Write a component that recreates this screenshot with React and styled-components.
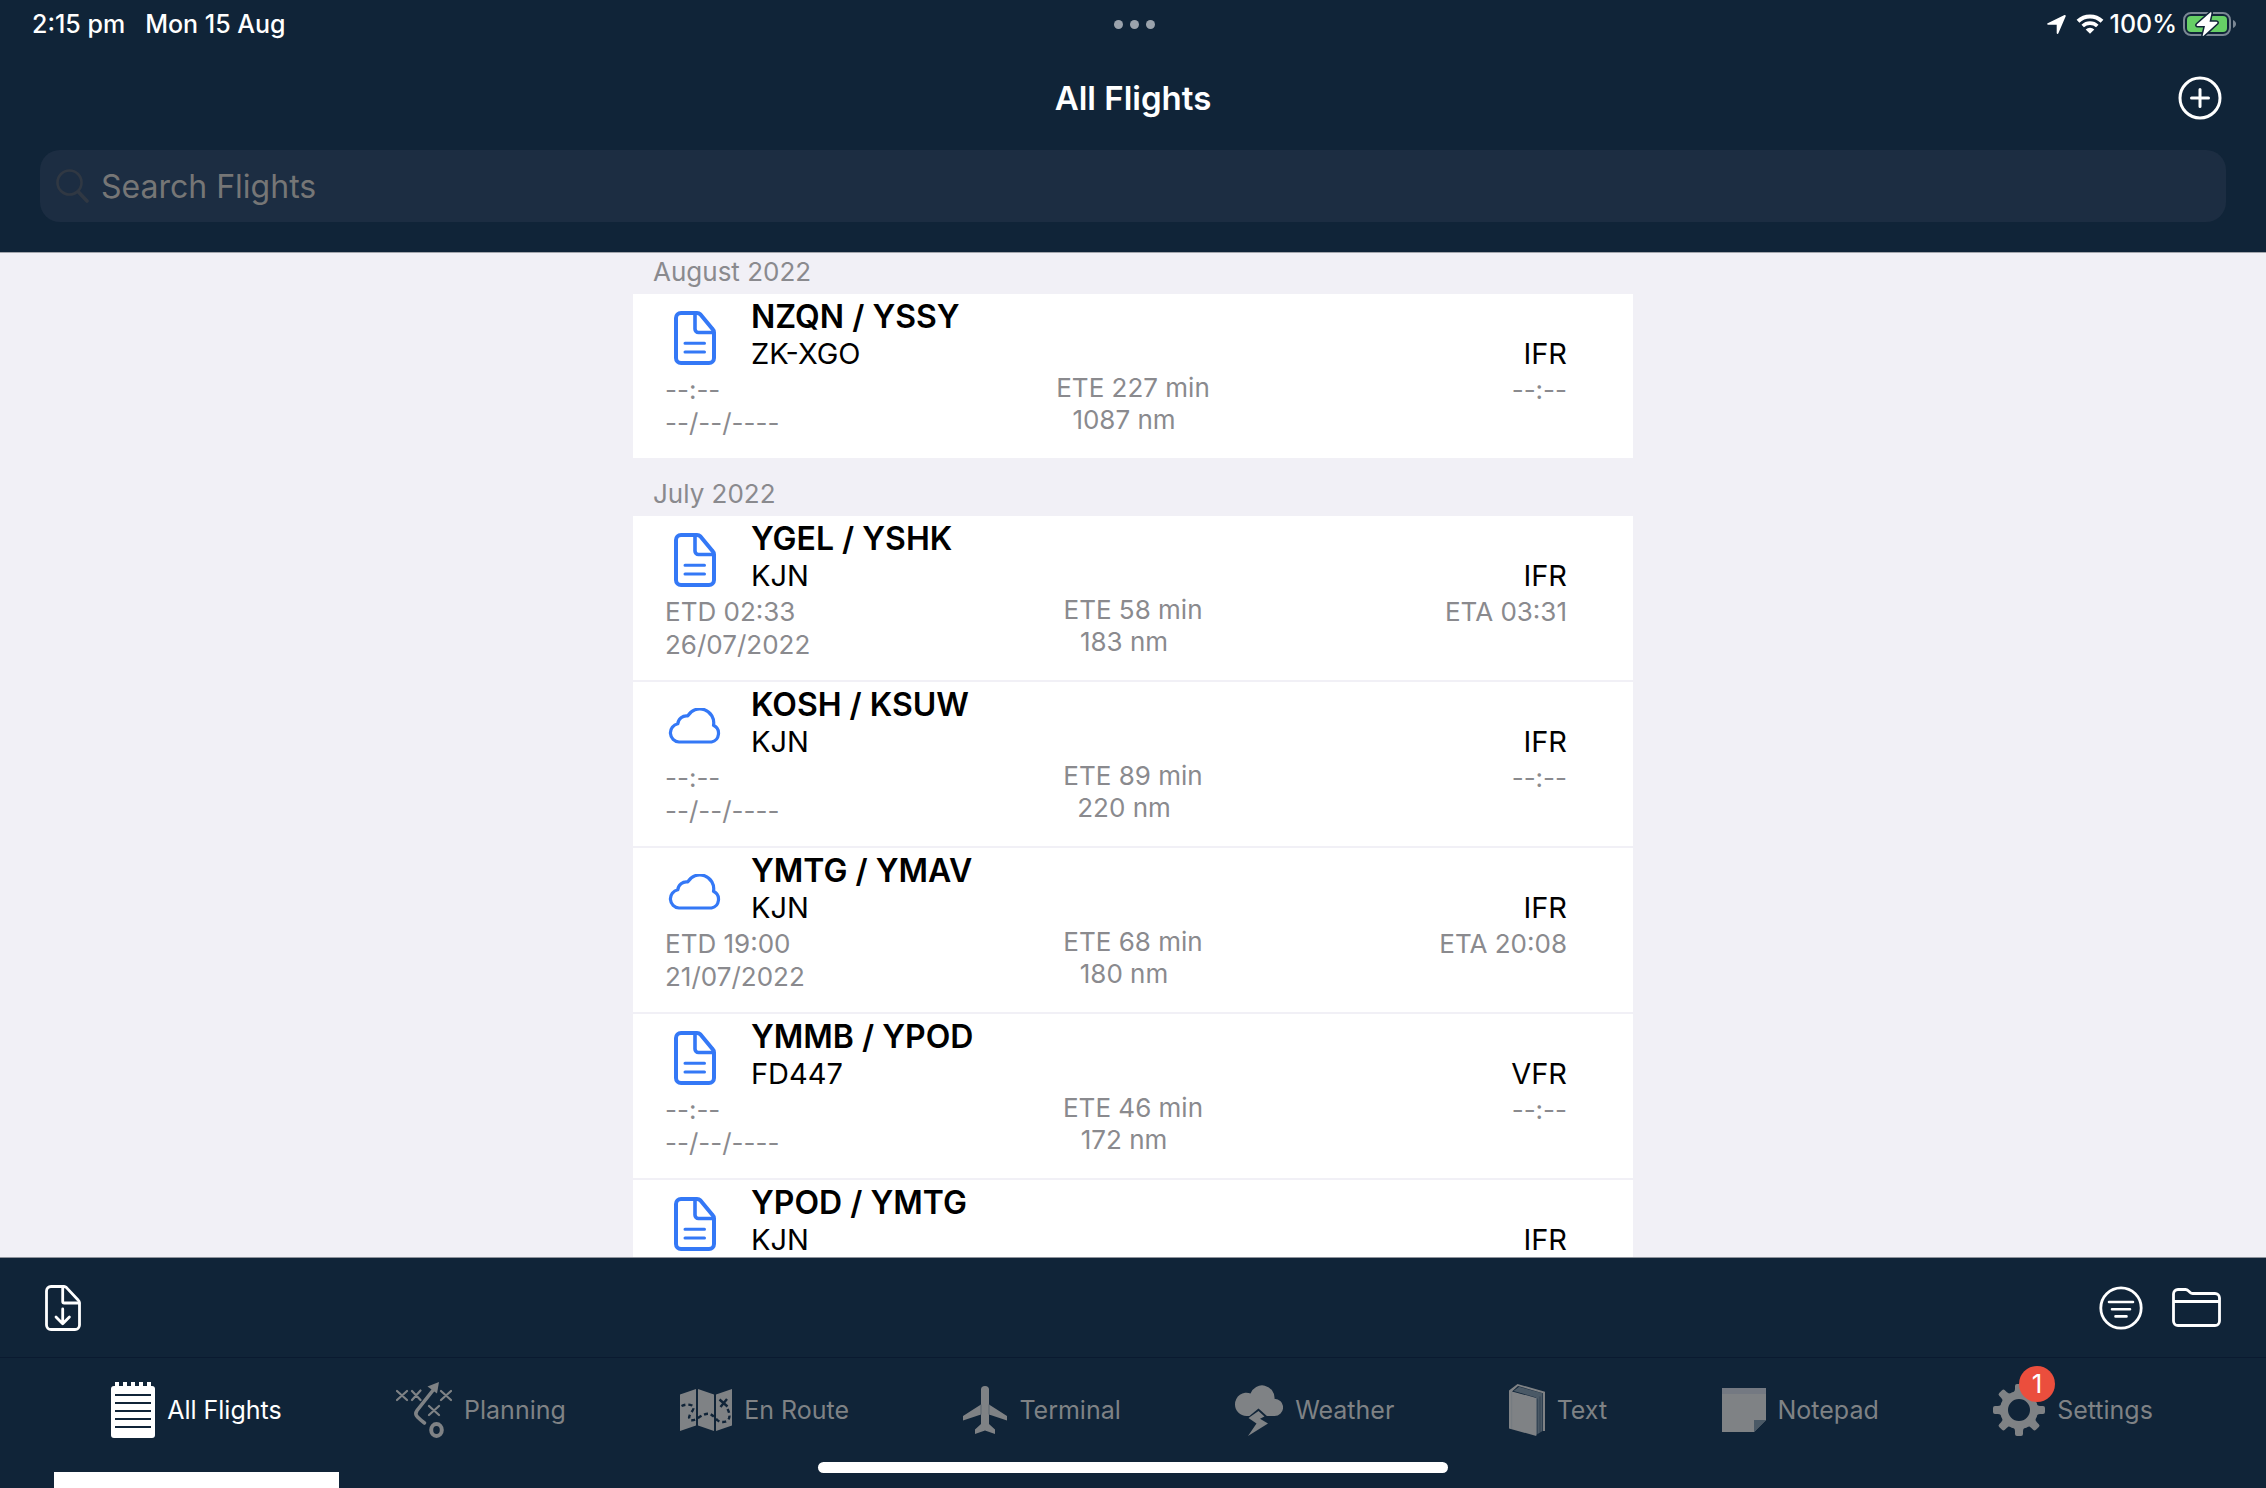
import React from "react";
import styled, { createGlobalStyle } from "styled-components";

const navy = "#102438";
const muted = "#7f8285";
const shade = "#4a5966";

const sections = [
  {
    month: "August 2022",
    flights: [
      {
        route: "NZQN / YSSY",
        craft: "ZK-XGO",
        rules: "IFR",
        icon: "document",
        meta: {
          etd: "--:--",
          date: "--/--/----",
          ete: "ETE 227 min",
          distance: "1087 nm",
          eta: "--:--",
        },
      },
    ],
  },
  {
    month: "July 2022",
    flights: [
      {
        route: "YGEL / YSHK",
        craft: "KJN",
        rules: "IFR",
        icon: "document",
        meta: {
          etd: "ETD 02:33",
          date: "26/07/2022",
          ete: "ETE 58 min",
          distance: "183 nm",
          eta: "ETA 03:31",
        },
      },
      {
        route: "KOSH / KSUW",
        craft: "KJN",
        rules: "IFR",
        icon: "cloud",
        meta: {
          etd: "--:--",
          date: "--/--/----",
          ete: "ETE 89 min",
          distance: "220 nm",
          eta: "--:--",
        },
      },
      {
        route: "YMTG / YMAV",
        craft: "KJN",
        rules: "IFR",
        icon: "cloud",
        meta: {
          etd: "ETD 19:00",
          date: "21/07/2022",
          ete: "ETE 68 min",
          distance: "180 nm",
          eta: "ETA 20:08",
        },
      },
      {
        route: "YMMB / YPOD",
        craft: "FD447",
        rules: "VFR",
        icon: "document",
        meta: {
          etd: "--:--",
          date: "--/--/----",
          ete: "ETE 46 min",
          distance: "172 nm",
          eta: "--:--",
        },
      },
      { route: "YPOD / YMTG", craft: "KJN", rules: "IFR", icon: "document" },
    ],
  },
];

const tabs = [
  { name: "All Flights", Icon: NotesIcon, active: true },
  { name: "Planning", Icon: PlanningIcon },
  { name: "En Route", Icon: MapIcon },
  { name: "Terminal", Icon: PlaneIcon },
  { name: "Weather", Icon: StormIcon },
  { name: "Text", Icon: BookIcon },
  { name: "Notepad", Icon: StickyIcon },
  { name: "Settings", Icon: GearIcon, badge: 1 },
];

export default function App() {
  return (
    <Page>
      <GlobalStyle />
      <Header>
        <StatusBar>
          <StatusGroup $gap={20}>
            <span>2:15 pm</span>
            <span>Mon 15 Aug</span>
          </StatusGroup>
          <Dots>
            <Dot />
            <Dot />
            <Dot />
          </Dots>
          <StatusGroup $gap={6} $end>
            <StatusGroup $gap={10}>
              <LocationIcon />
              <WifiIcon />
            </StatusGroup>
            <span>100%</span>
            <BatteryIcon />
          </StatusGroup>
        </StatusBar>
        <NavBar>
          <Heading>All Flights</Heading>
          <IconButton aria-label="Add flight">
            <AddIcon />
          </IconButton>
        </NavBar>
        <SearchArea>
          <SearchBox>
            <SearchIcon />
            <SearchInput
              type="text"
              aria-label="Search Flights"
              placeholder="Search Flights"
            />
          </SearchBox>
        </SearchArea>
      </Header>

      <Main>
        {sections.map((section) => (
          <Section key={section.month}>
            <SectionTitle>{section.month}</SectionTitle>
            <FlightList>
              {section.flights.map((flight) => (
                <FlightRow key={flight.route} flight={flight} />
              ))}
            </FlightList>
          </Section>
        ))}
      </Main>

      <ToolBar>
        <IconButton aria-label="Import flight">
          <ImportIcon />
        </IconButton>
        <ToolGroup>
          <IconButton aria-label="Filter">
            <FilterIcon />
          </IconButton>
          <IconButton aria-label="Folders">
            <FolderIcon />
          </IconButton>
        </ToolGroup>
      </ToolBar>

      <TabBar>
        {tabs.map(({ name, Icon, active, badge }) => (
          <Tab key={name} $active={active}>
            <TabIcon>
              <Icon />
              {badge && <Badge>{badge}</Badge>}
            </TabIcon>
            {name}
          </Tab>
        ))}
        <HomeIndicator />
      </TabBar>
    </Page>
  );
}

function FlightRow({ flight }) {
  const { route, craft, rules, icon, meta } = flight;
  return (
    <Flight>
      <FlightTop>
        <FlightIcon>
          {icon === "cloud" ? <CloudIcon /> : <DocumentIcon />}
        </FlightIcon>
        <FlightNames>
          <Route>{route}</Route>
          <Craft>{craft}</Craft>
        </FlightNames>
        <Craft>{rules}</Craft>
      </FlightTop>
      {meta && (
        <FlightMeta>
          <Departure>
            <span>{meta.etd}</span>
            <span>{meta.date}</span>
          </Departure>
          <Enroute>
            <span>{meta.ete}</span>
            <Distance>{meta.distance}</Distance>
          </Enroute>
          <Arrival>{meta.eta}</Arrival>
        </FlightMeta>
      )}
    </Flight>
  );
}

function LocationIcon() {
  return (
    <svg width="19" height="19" viewBox="0 0 19 19" fill="#fff">
      <path d="M.7 8.200 17.500.1c.8-.3 1.500.4 1.200 1.200l-7.300 17c-.4.9-1.700.8-1.700-.3V9.700H1.200C0 9.700-.2 8.600.7 8.200z" />
    </svg>
  );
}

function WifiIcon() {
  return (
    <svg width="28" height="20" viewBox="0 0 28 20" fill="none">
      <path d="M2 7.300a17.300 17.300 0 0 1 24 0" stroke="#fff" strokeWidth="4" />
      <path d="M6.700 12a10.600 10.600 0 0 1 14.600 0" stroke="#fff" strokeWidth="3.600" />
      <path d="M9.700 15.400a6.400 6.400 0 0 1 8.600 0L14 19.800z" fill="#fff" />
    </svg>
  );
}

function BatteryIcon() {
  return (
    <svg width="53" height="24" viewBox="0 0 53 24">
      <rect x="1" y="1" width="46" height="22" rx="7" fill="none" stroke="#7b8794" strokeWidth="2" />
      <rect x="4" y="4" width="40" height="16" rx="4" fill="#67cf66" />
      <path d="M50 8c4 1.500 4 6.500 0 8z" fill="#7b8794" />
      <path
        d="M27.300.5 14 12.300c-.8.8-.4 1.700.6 1.700H22l-2.200 9c-.3 1 .4 1.200 1.100.6L34 11.500c.8-.8.4-1.700-.6-1.700H26.500l2-8.700c.2-.9-.6-1.200-1.200-.6z"
        fill="#fff"
        stroke={navy}
        strokeWidth="3"
        paintOrder="stroke"
      />
    </svg>
  );
}

function AddIcon() {
  return (
    <svg width="44" height="44" viewBox="0 0 44 44" fill="none" stroke="#fff" strokeWidth="3" strokeLinecap="round">
      <circle cx="22" cy="22" r="20" />
      <path d="M22 13.500v17M13.500 22h17" />
    </svg>
  );
}

function SearchIcon() {
  return (
    <svg width="33" height="34" viewBox="0 0 33 34" fill="none" stroke="#303843" strokeLinecap="round">
      <circle cx="13.500" cy="13.500" r="12" strokeWidth="2.600" />
      <path d="m22.500 23 8.500 9" strokeWidth="3.600" />
    </svg>
  );
}

function DocumentIcon() {
  return (
    <svg width="42" height="54" viewBox="0 0 42 54" fill="none" stroke="#3478f6" strokeWidth="4" strokeLinecap="round" strokeLinejoin="round">
      <path d="M23 2H7a5 5 0 0 0-5 5v40a5 5 0 0 0 5 5h28a5 5 0 0 0 5-5V21.500a5 5 0 0 0-1.500-3.500L26.500 3.500A5 5 0 0 0 23 2z" />
      <path d="M21 3v15a3.500 3.500 0 0 0 3.500 3.500H39" strokeWidth="3.600" />
      <path d="M11 32.300h19.500M11 41h19.500" strokeWidth="3" />
    </svg>
  );
}

function CloudIcon() {
  return (
    <svg width="54" height="36" viewBox="0 0 54 36" fill="none" stroke="#3478f6" strokeWidth="3.200" strokeLinejoin="round">
      <path d="M11 34A9.200 9.200 0 0 1 9.800 15.800 8.600 8.600 0 0 1 19.700 8 13.900 13.900 0 0 1 45.500 17.300 8.900 8.900 0 0 1 43.500 34z" />
    </svg>
  );
}

function ImportIcon() {
  return (
    <svg width="36" height="46" viewBox="0 0 36 46" fill="none" stroke="#fff" strokeWidth="2.800" strokeLinecap="round" strokeLinejoin="round">
      <path d="M19 1.500H6A4.500 4.500 0 0 0 1.500 6v34A4.500 4.500 0 0 0 6 44.500h24a4.500 4.500 0 0 0 4.500-4.500V18a4 4 0 0 0-1.200-2.800L21.500 2.600A4 4 0 0 0 19 1.500z" />
      <path d="M17.700 2v14.500a1.500 1.500 0 0 0 1.500 1.500H34M17.700 24v14.500M11 32l6.700 6.700 6.700-6.700" />
    </svg>
  );
}

function FilterIcon() {
  return (
    <svg width="44" height="44" viewBox="0 0 44 44" fill="none" stroke="#fff" strokeWidth="2.800" strokeLinecap="round">
      <circle cx="22" cy="22" r="20.200" />
      <path d="M10 16h24M13 23.200h18M16.500 30.400h11" strokeWidth="2.600" />
    </svg>
  );
}

function FolderIcon() {
  return (
    <svg width="49" height="39" viewBox="0 0 49 39" fill="none" stroke="#fff" strokeWidth="2.800" strokeLinejoin="round">
      <path d="M1.500 6A4.500 4.500 0 0 1 6 1.500h7.500c1.200 0 2 .4 2.800 1.200l1.900 1.800c.7.700 1.400 1 2.400 1H43A4.500 4.500 0 0 1 47.500 10v23a4.500 4.500 0 0 1-4.500 4.500H6A4.500 4.500 0 0 1 1.500 33zM2 13.500h45" />
    </svg>
  );
}

function NotesIcon() {
  return (
    <svg width="44" height="56" viewBox="0 0 44 56">
      <path d="M4 0h4v5H4zM12 0h4v5h-4zM20 0h4v5h-4zM28 0h4v5h-4zM36 0h4v5h-4z" fill="#fff" />
      <rect y="4" width="44" height="52" rx="3" fill="#fff" />
      <path d="M4 13h36M4 21h36M4 29h36M4 37h36M4 45h36" stroke={navy} strokeWidth="2" />
    </svg>
  );
}

function PlanningIcon() {
  return (
    <svg width="56" height="56" viewBox="0 0 56 56" fill="none" stroke={muted} strokeLinecap="round">
      <path
        d="m1 9 10 9M11 9 1 18M16 9l8.500 9M24.500 8.500 16 18M45 9l10 9M55 9l-10 9M33 24l10 9M43 24l-10 9"
        strokeWidth="2.200"
      />
      <path d="m38 7-17 21.500q-2.500 3.500.5 6.500 3 3 7 6" strokeWidth="3.600" />
      <path d="M43 0 31.500 4.500 41 11.500z" fill={muted} stroke="none" />
      <ellipse cx="40.500" cy="48" rx="5.300" ry="5.900" strokeWidth="4" />
    </svg>
  );
}

function MapIcon() {
  return (
    <svg width="52" height="42" viewBox="0 0 52 42" fill={muted}>
      <path d="M0 5.500 16 0v36.500L0 42zM18 0l16 5.500V42l-16-5.500zM36 5.500 52 0v36.500L36 42z" />
      <path
        d="M1.500 17q5.500-2.500 10.500-.5 3 2 0 6-4.500 6-2 8.500 4 1 8-2 7.500-5.500 12-4 4 2 7 6 5 3.500 10 1 5-4 0-13"
        fill="none"
        stroke={navy}
        strokeWidth="2.400"
        strokeDasharray="4 3"
      />
      <path d="m39.500 10.500 8 7M47 10l-6.500 8" stroke={navy} strokeWidth="2.400" />
    </svg>
  );
}

function PlaneIcon() {
  return (
    <svg width="44" height="48" viewBox="0 0 44 48" fill={muted}>
      <path d="M18 3.500Q18 0 22 0t4 3.500v15L44 30v4.500l-18-6v9.500l6 5.500V48l-10-3.500L12 48v-4.500l6-5.500v-9.500l-18 6V30l18-11.500z" />
      <path d="M18 18.500v10M26 18.500v10" stroke={shade} strokeWidth=".7" />
    </svg>
  );
}

function StormIcon() {
  return (
    <svg width="48" height="52" viewBox="0 0 48 52" fill={muted}>
      <path d="M11.500 32A11.500 11.500 0 0 1 0 20.300 11.500 11.500 0 0 1 15.500 9.500 12.400 12.400 0 0 1 39.500 14.800 8.600 8.600 0 0 1 39.500 32z" />
      <path d="m12 34 11.500-9.500L33 33z" fill={navy} />
      <path d="m23.500 27 6 5.500-4.500 2.200 8 4.800L13 52l8.500-12.500L13.500 34z" />
    </svg>
  );
}

function BookIcon() {
  return (
    <svg width="36" height="52" viewBox="0 0 36 52">
      <path d="m4.500 7 5.500-4.200 23.500 6.500V47L27 51V13.500z" fill={shade} />
      <path d="M28.500 14.500v36M31 12.500v36" stroke={navy} strokeWidth=".6" opacity=".6" />
      <path d="M0 6.500 8.500 0 36 7.700V47h-2V9.300L9 2 3 7.400l24.300 6.500V52L0 44.500z" fill={muted} />
      <path d="M2.700 8v37" stroke="#717880" strokeWidth=".8" />
    </svg>
  );
}

function StickyIcon() {
  return (
    <svg width="44" height="44" viewBox="0 0 44 44">
      <path d="M0 0h44v32L32 44H0z" fill={muted} />
      <path d="M0 0h44v6H0z" fill="#747982" />
      <path d="M32 32h12L32 44z" fill={shade} />
    </svg>
  );
}

function GearIcon() {
  return (
    <svg width="52" height="52" viewBox="0 0 52 52">
      <circle cx="26" cy="26" r="15" fill="none" stroke={muted} strokeWidth="8" />
      {[0, 45, 90, 135, 180, 225, 270, 315].map((angle) => (
        <path
          key={angle}
          d="M20 9q2-1.500 2-4V2q0-2 2-2h4q2 0 2 2v3q0 2.500 2 4z"
          fill={muted}
          transform={`rotate(${angle} 26 26)`}
        />
      ))}
    </svg>
  );
}

const GlobalStyle = createGlobalStyle`
  * {
    box-sizing: border-box;
  }

  body {
    margin: 0;
    background: #f1f0f6;
    font-family: Inter, "Liberation Sans", sans-serif;
  }

  svg {
    display: block;
    flex-shrink: 0;
  }

  button {
    font-family: inherit;
    border: none;
    background: none;
    padding: 0;
    cursor: pointer;
  }
`;

const Page = styled.div`
  display: flex;
  flex-direction: column;
  height: 100vh;
`;

const Header = styled.header`
  background: ${navy};
  border-bottom: 1px solid #a3a6ad;
  color: #fff;
`;

const StatusBar = styled.div`
  display: grid;
  grid-template-columns: 1fr auto 1fr;
  align-items: center;
  height: 48px;
  padding: 0 30px 0 32px;
  font-size: 25px;
  font-weight: 500;
`;

const StatusGroup = styled.div`
  display: flex;
  align-items: center;
  gap: ${(props) => props.$gap}px;
  justify-content: ${(props) => (props.$end ? "flex-end" : "flex-start")};
`;

const Dots = styled.div`
  display: flex;
  gap: 7px;
`;

const Dot = styled.span`
  width: 9px;
  height: 9px;
  border-radius: 50%;
  background: #9ba3ac;
`;

const NavBar = styled.div`
  display: grid;
  grid-template-columns: 1fr auto 1fr;
  align-items: center;
  height: 100px;
  padding: 0 44px;

  button {
    justify-self: end;
  }
`;

const Heading = styled.h1`
  grid-column: 2;
  margin: 0;
  font-size: 33px;
  font-weight: 600;
`;

const IconButton = styled.button`
  display: block;
`;

const SearchArea = styled.div`
  padding: 2px 40px 30px;
`;

const SearchBox = styled.label`
  display: flex;
  align-items: center;
  gap: 12px;
  height: 72px;
  padding: 0 16px;
  border-radius: 20px;
  background: #1c2d42;
`;

const SearchInput = styled.input`
  flex: 1;
  border: none;
  outline: none;
  padding: 0;
  background: transparent;
  color: #fff;
  font-family: inherit;
  font-size: 32px;

  &::placeholder {
    color: #767676;
    opacity: 1;
  }
`;

const Main = styled.main`
  flex: 1;
  min-height: 0;
  overflow-y: auto;
  scrollbar-width: none;
  background: #f1f0f6;
`;

const Section = styled.section`
  max-width: 1000px;
  margin: 0 auto 17px;
`;

const SectionTitle = styled.h2`
  margin: 0;
  padding: 3px 20px 6px;
  font-size: 26px;
  line-height: 32px;
  font-weight: 400;
  color: #8a8a8e;
`;

const FlightList = styled.ul`
  display: flex;
  flex-direction: column;
  gap: 2px;
  margin: 0;
  padding: 0;
  list-style: none;
`;

const Flight = styled.li`
  min-height: 164px;
  padding: 3px 32px 0;
  background: #fff;
`;

const FlightTop = styled.div`
  display: flex;
  align-items: flex-end;
  padding-right: 34px;
`;

const FlightIcon = styled.div`
  display: flex;
  align-items: center;
  justify-content: center;
  width: 60px;
  height: 66px;
`;

const FlightNames = styled.div`
  flex: 1;
  padding-left: 26px;
`;

const Route = styled.h3`
  margin: 0;
  font-size: 32px;
  line-height: 40px;
  font-weight: 600;
`;

const Craft = styled.div`
  font-size: 29px;
  line-height: 34px;
`;

const FlightMeta = styled.div`
  display: grid;
  grid-template-columns: 1fr auto 1fr;
  font-size: 26px;
  line-height: 33px;
  color: #8a8a8e;
`;

const Departure = styled.div`
  display: flex;
  flex-direction: column;
  padding-top: 2px;
`;

const Enroute = styled.div`
  display: flex;
  flex-direction: column;
  align-items: center;
  padding-top: 1px;
  line-height: 32px;
`;

const Distance = styled.span`
  padding-right: 18px;
`;

const Arrival = styled.div`
  padding: 2px 34px 0 0;
  text-align: right;
`;

const ToolBar = styled.div`
  display: flex;
  align-items: center;
  justify-content: space-between;
  height: 100px;
  padding: 0 45px;
  border-top: 1px solid #8f949c;
  background: ${navy};
`;

const ToolGroup = styled.div`
  display: flex;
  align-items: center;
  gap: 29px;
`;

const TabBar = styled.nav`
  position: relative;
  display: flex;
  height: 131px;
  padding: 0 56px 0 54px;
  border-top: 1px solid #0a1a30;
  background: ${navy};
`;

const Tab = styled.button`
  display: flex;
  flex: 1 1 auto;
  align-items: center;
  justify-content: center;
  gap: 12px;
  padding-bottom: 10px;
  border-bottom: 16px solid ${(props) => (props.$active ? "#fff" : "transparent")};
  color: ${(props) => (props.$active ? "#fff" : muted)};
  font-size: 25px;
`;

const TabIcon = styled.span`
  position: relative;
`;

const Badge = styled.span`
  position: absolute;
  top: -18px;
  left: 26px;
  width: 36px;
  height: 36px;
  border-radius: 50%;
  background: #eb4e3d;
  color: #fff;
  font-size: 26px;
  line-height: 36px;
  text-align: center;
`;

const HomeIndicator = styled.span`
  position: absolute;
  left: 50%;
  bottom: 15px;
  width: 630px;
  height: 11px;
  margin-left: -315px;
  border-radius: 6px;
  background: #fff;
`;
